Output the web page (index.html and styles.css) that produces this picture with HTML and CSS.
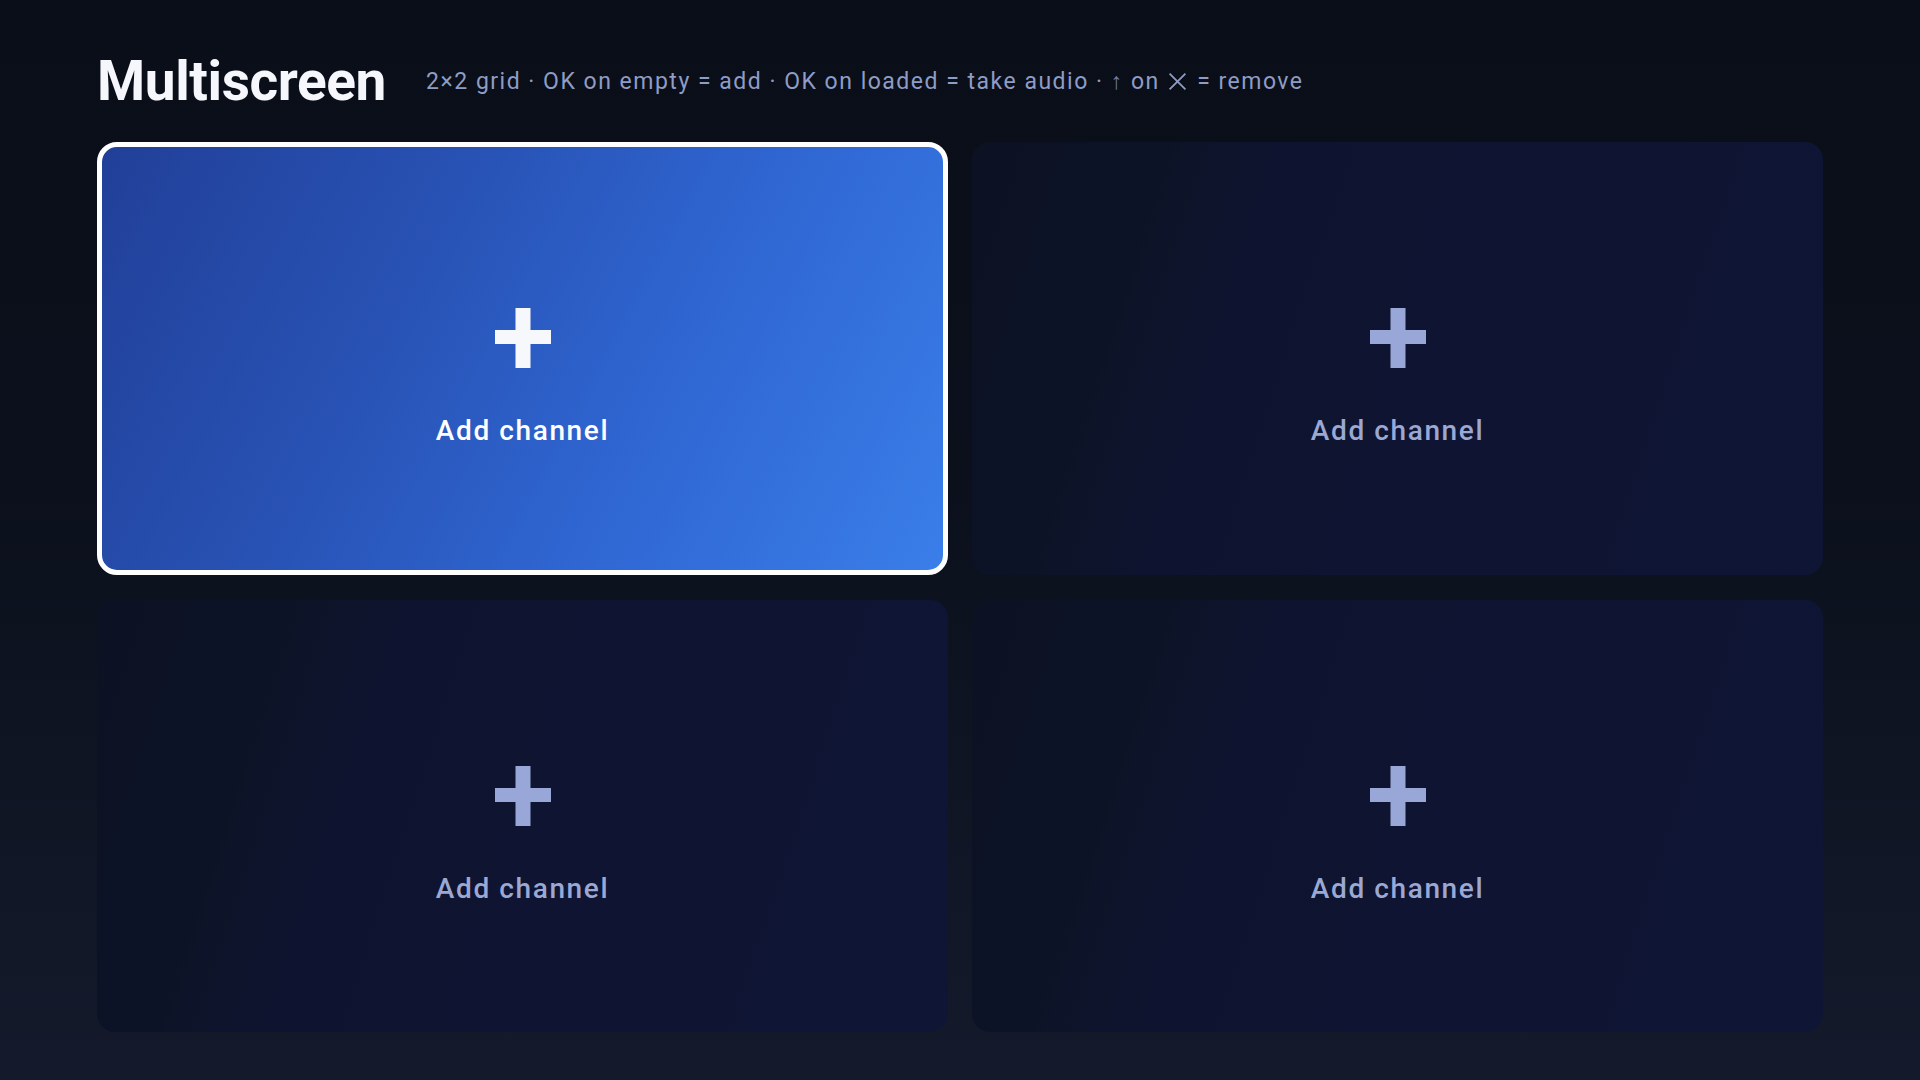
FILE: index.html
```html
<!DOCTYPE html>
<html lang="en">
<head>
<meta charset="utf-8">
<title>Multiscreen</title>
<link rel="stylesheet" href="styles.css">
</head>
<body>
<main class="page">
  <header class="header">
    <h1 class="title">Multiscreen</h1>
    <p class="hint">2×2 grid · OK on empty = add · OK on loaded = take audio · <span class="arrow">↑</span> on <svg class="x-icon" viewBox="0 0 18 18" aria-hidden="true"><path d="M1.5 1.5 L16.5 16.5 M16.5 1.5 L1.5 16.5" /></svg> = remove</p>
  </header>
  <section class="grid">
    <div class="slot slot-focused">
      <svg class="plus" viewBox="0 0 56 60" aria-hidden="true"><rect x="20.5" y="0" width="15" height="60"/><rect x="0" y="22" width="56" height="14"/></svg>
      <span class="label">Add channel</span>
    </div>
    <div class="slot">
      <svg class="plus" viewBox="0 0 56 60" aria-hidden="true"><rect x="20.5" y="0" width="15" height="60"/><rect x="0" y="22" width="56" height="14"/></svg>
      <span class="label">Add channel</span>
    </div>
    <div class="slot">
      <svg class="plus" viewBox="0 0 56 60" aria-hidden="true"><rect x="20.5" y="0" width="15" height="60"/><rect x="0" y="22" width="56" height="14"/></svg>
      <span class="label">Add channel</span>
    </div>
    <div class="slot">
      <svg class="plus" viewBox="0 0 56 60" aria-hidden="true"><rect x="20.5" y="0" width="15" height="60"/><rect x="0" y="22" width="56" height="14"/></svg>
      <span class="label">Add channel</span>
    </div>
  </section>
</main>
</body>
</html>
```
FILE: styles.css
```css
* { box-sizing: border-box; }

html, body {
  margin: 0;
  padding: 0;
  width: 1920px;
  height: 1080px;
  overflow: hidden;
}

body {
  font-family: Roboto, "Noto Sans", "Liberation Sans", sans-serif;
  background: linear-gradient(180deg, #0a0e18 0%, #0b101c 45%, #141a2b 100%);
  color: #f4f6fb;
}

.page {
  height: 1080px;
  padding: 48px 97px 48px 97px;
  display: flex;
  flex-direction: column;
}

.header {
  display: flex;
  align-items: center;
  gap: 40px;
  height: 67px;
  margin-bottom: 27px;
}

.title {
  margin: 0;
  font-size: 55px;
  line-height: 67px;
  font-weight: 700;
  letter-spacing: -0.4px;
  color: #f5f7fc;
}

.hint {
  margin: 0;
  padding-top: 0;
  font-size: 23px;
  line-height: 27px;
  letter-spacing: 1.5px;
  color: #8e9cc6;
  display: flex;
  align-items: center;
  white-space: pre;
}

.arrow {
  color: #6f7ca4;
}

.x-icon {
  width: 19px;
  height: 19px;
  margin: 0 3px 0 1px;
  fill: none;
  stroke: #8e9cc6;
  stroke-width: 1.7;
}

.grid {
  flex: 1;
  display: grid;
  grid-template-columns: 1fr 1fr;
  grid-template-rows: 1fr 1fr;
  gap: 25px 24px;
}

.slot {
  border-radius: 18px;
  background: linear-gradient(108deg, #0c1223 0%, #0d1327 20%, #0e1430 34%, #0e1432 70%, #0f1535 100%);
  display: flex;
  flex-direction: column;
  align-items: center;
  justify-content: center;
  padding-top: 40px;
  color: #9ba8d4;
}

.slot-focused {
  border: 5px solid #ffffff;
  border-radius: 20px;
  background: linear-gradient(118deg, #213f98 0%, #2852b4 35%, #2f66d2 65%, #3a7ee9 100%);
  color: #ffffff;
}

.plus {
  width: 56px;
  height: 60px;
  fill: #98a7d8;
}

.slot-focused .plus {
  fill: #f7f8fc;
}

.label {
  margin-top: 46px;
  font-size: 28px;
  line-height: 34px;
  font-weight: 500;
  letter-spacing: 1.6px;
}
```
